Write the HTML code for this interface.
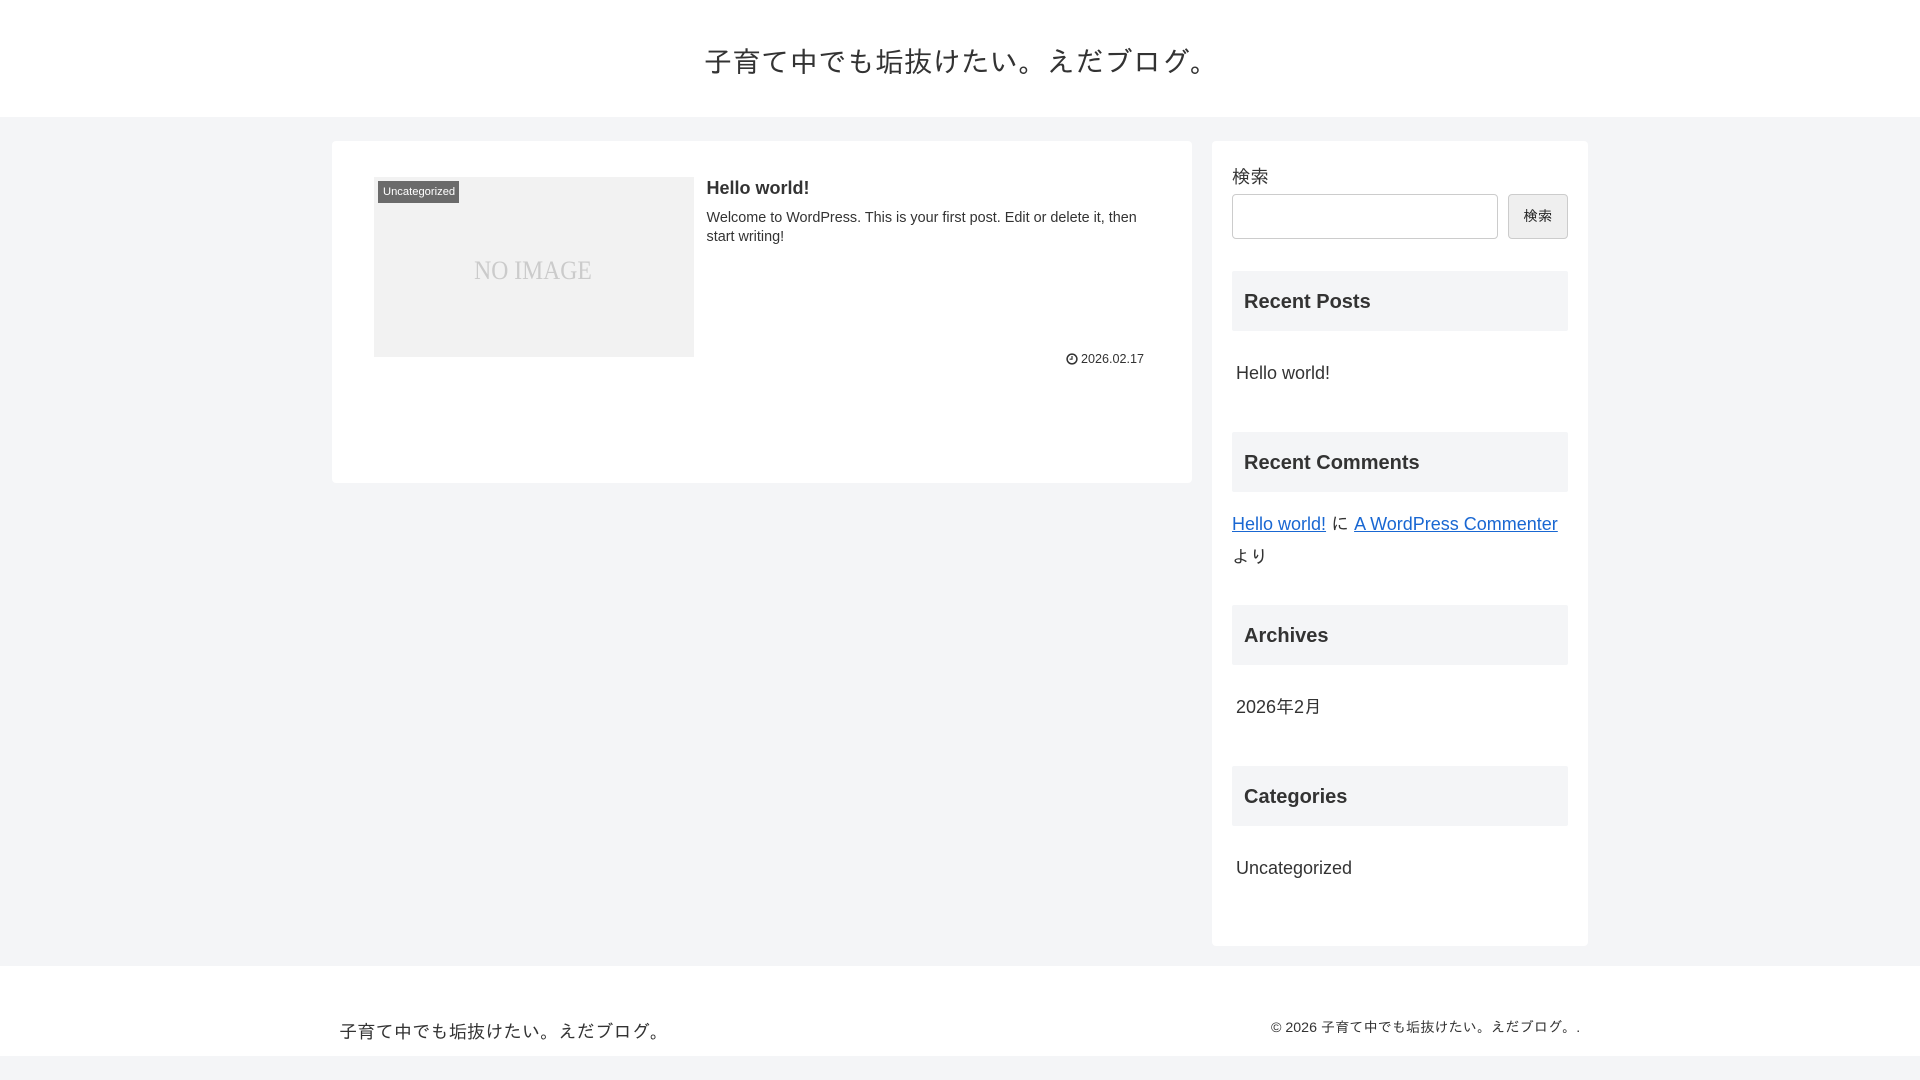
<!DOCTYPE html>
<html lang="ja">
<head>
<meta charset="utf-8">
<title>子育て中でも垢抜けたい。えだブログ。</title>
<style>
*{box-sizing:border-box}
html,body{margin:0;padding:0;width:1920px;height:1080px;overflow:hidden;background:#f4f5f7}
body{position:relative;font-family:"Liberation Sans","IPAGothic",sans-serif;color:#333;font-size:18px}
.a{position:absolute;white-space:nowrap}
.w{position:absolute;background:#fff}
.t{position:absolute;left:1232px;width:336px;height:60px;background:#f4f5f7;border-radius:2px;font-weight:bold;font-size:20px;line-height:62px;padding-left:12px;font-family:"Liberation Sans",sans-serif}
a{color:#1967d2;text-decoration:underline}
</style>
</head>
<body>
<div class="w" style="left:0;top:0;width:1920px;height:117px"></div>
<div class="a" style="left:1px;width:1920px;top:43px;text-align:center;font-size:28.6px;line-height:40px">子育て中でも垢抜けたい。えだブログ。</div>

<div class="w" style="left:332px;top:141px;width:860px;height:342px;border-radius:4px"></div>
<div class="a" style="left:374px;top:177px;width:320px;height:180px;background:#f2f2f2"></div>
<div class="a" style="left:373px;top:177px;width:320px;height:180px;line-height:187px;text-align:center;font-family:'Liberation Serif',serif;font-size:26px;transform:scaleX(.91);color:#cbcbcb">NO IMAGE</div>
<div class="a" style="left:378px;top:181px;width:81px;height:22px;background:#6b6b6b;color:#fff;font-size:11.2px;line-height:22.5px;padding-left:5px">Uncategorized</div>
<div class="a" style="left:706.5px;top:176px;font-weight:bold;font-size:18px;line-height:24px">Hello world!</div>
<div class="a" style="left:706.5px;top:209px;font-size:14.4px;line-height:19px">Welcome to WordPress. This is your first post. Edit or delete it, then<br>start writing!</div>
<svg class="a" style="left:1066px;top:353px" width="12" height="12" viewBox="0 0 12 12"><circle cx="6" cy="6" r="4.9" fill="none" stroke="#333" stroke-width="1.5"/><path d="M6 3v3.2H3.6" fill="none" stroke="#333" stroke-width="1.2"/></svg>
<div class="a" style="left:1081px;top:350px;font-size:12.6px;line-height:18px">2026.02.17</div>

<div class="w" style="left:1212px;top:141px;width:376px;height:805px;border-radius:4px"></div>
<div class="a" style="left:1232px;top:164px;font-size:18.4px;line-height:26px">検索</div>
<div class="a" style="left:1232px;top:194px;width:266px;height:45px;background:#fff;border:1px solid #ccc;border-radius:4px"></div>
<div class="a" style="left:1508px;top:194px;width:60px;height:45px;background:#efefef;border:1px solid #ccc;border-radius:4px;text-align:center;font-size:14.4px;line-height:44px;color:#222">検索</div>

<div class="t" style="top:271px">Recent Posts</div>
<div class="a" style="left:1236px;top:360px;line-height:26px">Hello world!</div>

<div class="t" style="top:432px">Recent Comments</div>
<div class="a" style="left:1232px;top:508px;line-height:33px;width:336px;white-space:normal"><a>Hello world!</a> に <a>A WordPress Commenter</a> より</div>

<div class="t" style="top:605px">Archives</div>
<div class="a" style="left:1236px;top:694px;line-height:26px">2026年2月</div>

<div class="t" style="top:766px">Categories</div>
<div class="a" style="left:1236px;top:855px;line-height:26px">Uncategorized</div>

<div class="w" style="left:0;top:966px;width:1920px;height:90px"></div>
<div class="a" style="left:339px;top:1018px;font-size:18.3px;line-height:27px">子育て中でも垢抜けたい。えだブログ。</div>
<div class="a" style="left:1271px;top:1018.5px;font-size:14.2px;line-height:18px">© 2026 子育て中でも垢抜けたい。えだブログ。.</div>
</body>
</html>
